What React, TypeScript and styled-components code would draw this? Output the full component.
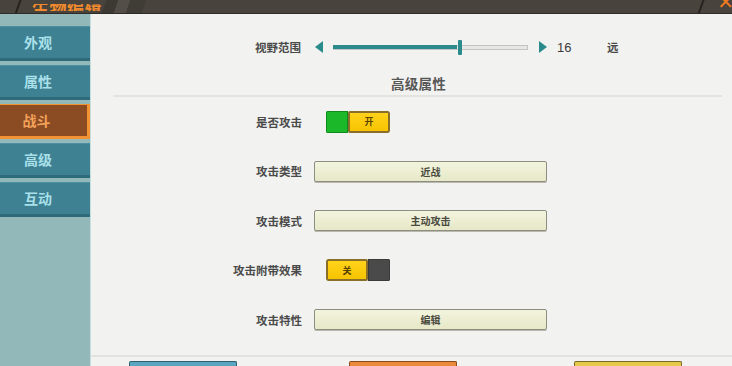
import React from "react";
import styled, { createGlobalStyle } from "styled-components";

const GlobalStyle = createGlobalStyle`
  html, body {
    margin: 0;
    padding: 0;
    width: 100%;
    height: 100%;
    overflow: hidden;
  }
  body {
    font-family: "Noto Sans CJK SC", "Noto Sans", sans-serif;
    background: #f2f2f0;
  }
`;

const Screen = styled.div`
  width: 732px;
  height: 366px;
  display: flex;
  flex-direction: column;
  overflow: hidden;
`;

const TopBar = styled.div`
  height: 13px;
  flex: none;
  background: #48433c;
  border-bottom: 1px solid #2f2c28;
  display: flex;
  align-items: flex-end;
  overflow: hidden;
  position: relative;
`;

const Slash = styled.div<{ $left: number }>`
  position: absolute;
  top: -2px;
  left: ${(p) => p.$left}px;
  width: 2px;
  height: 18px;
  background: #24211e;
  transform: skewX(-20deg);
`;

const Checker = styled.div`
  position: absolute;
  top: 0;
  left: 104px;
  width: 40px;
  height: 13px;
  background: linear-gradient(90deg, #3a3631 0 30%, #55504a 30% 60%, #3e3a35 60% 100%);
  transform: skewX(-20deg);
  opacity: 0.8;
`;

const Title = styled.div`
  margin-left: 32px;
  margin-bottom: 2px;
  font-size: 17px;
  line-height: 7px;
  height: 7px;
  font-weight: 700;
  color: #f08a2c;
  letter-spacing: 0.5px;
  overflow: hidden;
  display: flex;
  align-items: flex-end;
`;

const Body = styled.div`
  flex: 1;
  display: flex;
  min-height: 0;
`;

const Sidebar = styled.nav`
  width: 90px;
  flex: none;
  background: #92b8b9;
  padding-top: 12px;
  display: flex;
  flex-direction: column;
  gap: 2px;
  border-right: 1px solid #c7dedf;
`;

const Tab = styled.div<{ $active?: boolean }>`
  height: 33px;
  display: flex;
  align-items: center;
  justify-content: center;
  padding-right: 14px;
  padding-bottom: 2px;
  box-sizing: border-box;
  height: 35px;
  font-size: 14px;
  font-weight: 700;
  color: ${(p) => (p.$active ? "#f4a25a" : "#a9e0ea")};
  background: ${(p) => (p.$active ? "#8b4c24" : "#3e8193")};
  border-top: 1px solid ${(p) => (p.$active ? "#f39233" : "#4b8fa0")};
  border-bottom: 3px solid ${(p) => (p.$active ? "#f39233" : "#2f6a7a")};
  border-right: ${(p) => (p.$active ? "3px solid #f39233" : "0")};
  margin-bottom: 2px;
`;

const Main = styled.main`
  flex: 1;
  display: flex;
  flex-direction: column;
  background: #f2f2f0;
`;

const Content = styled.div`
  flex: 1;
  display: flex;
  flex-direction: column;
  border-bottom: 2px solid #e2e2df;
`;

const SliderRow = styled.div`
  height: 40px;
  margin-top: 13px;
  display: flex;
  align-items: center;
  padding-left: 164px;
`;

const Label = styled.div`
  font-size: 11.5px;
  font-weight: 700;
  color: #4a4a4a;
  white-space: nowrap;
`;

const Arrow = styled.div<{ $dir: "left" | "right" }>`
  width: 0;
  height: 0;
  border-top: 6px solid transparent;
  border-bottom: 6px solid transparent;
  ${(p) =>
    p.$dir === "left"
      ? "border-right: 8px solid #2a8a8c;"
      : "border-left: 8px solid #2a8a8c;"}
`;

const Track = styled.div`
  width: 195px;
  height: 5px;
  margin: 0 11px 0 10px;
  background: #e6e6e4;
  border: 1px solid #c4c4c2;
  box-sizing: border-box;
  position: relative;
`;

const Fill = styled.div`
  height: 4px;
  margin-top: -1px;
  margin-left: -1px;
  background: #2a8a8c;
`;

const Thumb = styled.div`
  position: absolute;
  top: -6px;
  width: 4px;
  height: 15px;
  background: #2a8a8c;
  border-radius: 1px;
`;

const Value = styled.div`
  margin-left: 10px;
  width: 50px;
  font-family: "Liberation Sans", Arial, sans-serif;
  font-size: 13px;
  color: #3a3a3a;
`;

const SectionTitle = styled.div`
  height: 20px;
  margin-top: 6px;
  display: flex;
  align-items: center;
  justify-content: center;
  padding-left: 14px;
  font-size: 13.5px;
  font-weight: 700;
  color: #575757;
  letter-spacing: 0.3px;
`;

const Divider = styled.div`
  height: 2px;
  background: #e3e3e0;
  margin: 2px 10px 0 22px;
`;

const Row = styled.div`
  height: 49.5px;
  display: grid;
  grid-template-columns: 211px 1fr;
  column-gap: 12px;
  align-items: center;
  ${Label} {
    text-align: right;
  }
`;

const Field = styled.div`
  width: 233px;
  height: 21px;
  box-sizing: border-box;
  display: flex;
  align-items: center;
  justify-content: center;
  font-size: 10px;
  font-weight: 700;
  color: #4a4a40;
  background: linear-gradient(180deg, #f3f4dd 0%, #e6e8c8 100%);
  border: 1px solid #8d8d82;
  border-radius: 2px;
  box-shadow: 0 1px 0 #b9b9ae;
`;

const Toggle = styled.div<{ $on: boolean }>`
  margin-left: 12px;
  width: 64px;
  height: 22px;
  display: flex;
  flex-direction: ${(p) => (p.$on ? "row" : "row-reverse")};
  border-radius: 2px;
  overflow: hidden;
`;

const ToggleBase = styled.div<{ $on: boolean }>`
  width: 22px;
  box-sizing: border-box;
  background: ${(p) => (p.$on ? "#1bb82a" : "#4a4a4a")};
  border: 1px solid ${(p) => (p.$on ? "#118a1c" : "#3a3a3a")};
`;

const ToggleKnob = styled.div`
  flex: 1;
  box-sizing: border-box;
  display: flex;
  align-items: center;
  justify-content: center;
  font-size: 9px;
  font-weight: 700;
  color: #5a4200;
  background: linear-gradient(180deg, #ffd21a 0%, #f6c400 100%);
  border: 2px solid #8a6f2a;
  border-radius: 2px;
`;

const Footer = styled.div`
  height: 9px;
  display: flex;
  align-items: flex-end;
  padding-left: 38px;
  gap: 112px;
`;

const FootButton = styled.div<{ $bg: string; $border: string; $shift?: number }>`
  width: 106px;
  height: 4px;
  margin-left: ${(p) => p.$shift || 0}px;
  background: ${(p) => p.$bg};
  border: 1px solid ${(p) => p.$border};
  border-bottom: 0;
  border-radius: 2px 2px 0 0;
`;

const CloseMark = styled.div`
  position: absolute;
  right: -2px;
  top: -8px;
  font-family: "DejaVu Sans", sans-serif;
  font-size: 20px;
  font-weight: 700;
  color: #f07a20;
  line-height: 20px;
`;

function Switch({ on, text }: { on: boolean; text: string }) {
  return (
    <Toggle $on={on}>
      <ToggleBase $on={on} />
      <ToggleKnob>{text}</ToggleKnob>
    </Toggle>
  );
}

const tabs = ["外观", "属性", "战斗", "高级", "互动"];

export default function App() {
  const value = 16;
  const ratio = 0.64;
  return (
    <Screen>
      <GlobalStyle />
      <TopBar>
        <Slash $left={17} />
        <Checker />
        <Title>生物编辑</Title>
        <Slash $left={700} />
        <CloseMark>✕</CloseMark>
      </TopBar>
      <Body>
        <Sidebar>
          {tabs.map((t) => (
            <Tab key={t} $active={t === "战斗"}>
              {t}
            </Tab>
          ))}
        </Sidebar>
        <Main>
          <Content>
            <SliderRow>
              <Label>视野范围</Label>
              <div style={{ width: 14 }} />
              <Arrow $dir="left" />
              <Track>
                <Fill style={{ width: `${ratio * 100}%` }} />
                <Thumb style={{ left: `${ratio * 100}%` }} />
              </Track>
              <Arrow $dir="right" />
              <Value>{value}</Value>
              <Label>远</Label>
            </SliderRow>
            <SectionTitle>高级属性</SectionTitle>
            <Divider />
            <Row>
              <Label>是否攻击</Label>
              <Switch on text="开" />
            </Row>
            <Row>
              <Label>攻击类型</Label>
              <Field>近战</Field>
            </Row>
            <Row>
              <Label>攻击模式</Label>
              <Field>主动攻击</Field>
            </Row>
            <Row>
              <Label>攻击附带效果</Label>
              <Switch on={false} text="关" />
            </Row>
            <Row>
              <Label>攻击特性</Label>
              <Field>编辑</Field>
            </Row>
          </Content>
          <Footer>
            <FootButton $bg="#5aa6c0" $border="#2d5f70" />
            <FootButton $bg="#ec8a3c" $border="#8a4a1c" />
            <FootButton $bg="#e6c84a" $border="#7a6a2a" $shift={5} />
          </Footer>
        </Main>
      </Body>
    </Screen>
  );
}
